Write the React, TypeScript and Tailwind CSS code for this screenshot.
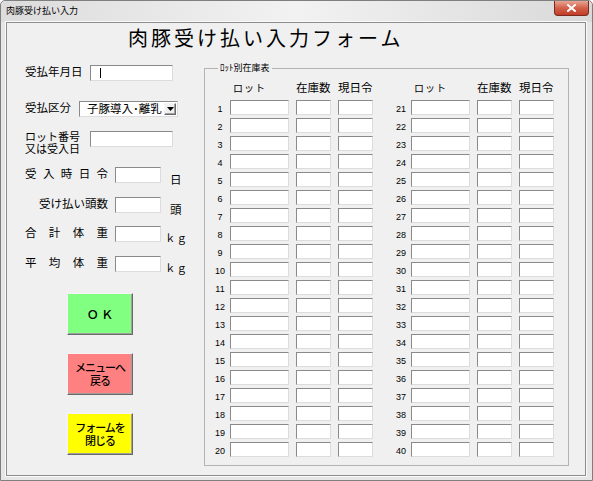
import React from 'react';

const sunken =
  'bg-white border border-t-[#8a8a8a] border-l-[#8a8a8a] border-r-[#dcdcdc] border-b-[#dcdcdc]';
const raised =
  'border border-t-[#f4f4f4] border-l-[#f4f4f4] border-r-[#696969] border-b-[#696969] shadow-[inset_-1px_-1px_0_#a0a0a0]';

function Spaced({ text, className }: { text: string; className?: string }) {
  return (
    <div className={`flex justify-between ${className ?? ''}`}>
      {text.split('').map((c, i) => (
        <span key={i}>{c}</span>
      ))}
    </div>
  );
}

function LotGroup({ from }: { from: number }) {
  const rows = Array.from({ length: 20 }, (_, i) => from + i);
  return (
    <div className="flex flex-col">
      {/* header */}
      <div className="mt-[7px] flex h-[14px] items-center text-[11.5px] leading-none">
        <span className="w-[18px]" />
        <span className="w-[59px] pl-[3px] text-[10px] tracking-[1px]">ロット</span>
        <span className="ml-[7px] w-[35px] whitespace-nowrap">在庫数</span>
        <span className="ml-[7px] w-[35px] whitespace-nowrap">現日令</span>
      </div>
      <div className="mt-[5px] flex flex-col gap-[3px]">
        {rows.map((n) => (
          <div key={n} className="flex h-[15px]">
            <span className="mr-[2px] w-[16px] self-end pb-[1px] text-center font-['Liberation_Sans',sans-serif] text-[9px] font-medium leading-none">
              {n}
            </span>
            <div className={`${sunken} w-[59px]`} />
            <div className={`${sunken} ml-[7px] w-[35px]`} />
            <div className={`${sunken} ml-[7px] w-[35px]`} />
          </div>
        ))}
      </div>
    </div>
  );
}

export default function App() {
  return (
    <div className="flex h-[481px] w-[593px] flex-col rounded-t-[5px] border border-[#7f7f7f] bg-[#e6e6e6] font-['Noto_Sans_CJK_JP',sans-serif] text-black">
      {/* Title bar */}
      <div className="flex h-[21px] shrink-0 items-start justify-between rounded-t-[5px] bg-linear-to-r from-[#dcdcdc] via-[#f2f2f2] to-[#d9d9d9] pl-[5px] pr-[3px]">
        <span className="mt-[4px] text-[9px] leading-[12px]">肉豚受け払い入力</span>
        <button className="flex h-[15px] w-[35px] items-center justify-center rounded-b-[4px] border border-t-0 border-[#7a2a20] bg-linear-to-b from-[#e9a593] via-[#d2604b] to-[#c23c26]">
          <svg width="9" height="8" viewBox="0 0 9 8">
            <path d="M1 1 L8 7 M8 1 L1 7" stroke="#ffffff" strokeWidth="2" strokeLinecap="square" />
          </svg>
        </button>
      </div>

      {/* Client area */}
      <div className="mb-[4px] ml-[5px] mr-[6px] flex h-[454px] flex-col border border-[#8d8d8d] bg-[#f0f0f0] shadow-[0_0_0_1px_#fafafa]">
        <div className="h-[39px] pl-[121px] pt-[4px]">
          <h1 className="font-['Liberation_Serif','Noto_Sans_CJK_JP',serif] text-[20px] leading-[24px] tracking-[3px]">
            肉豚受け払い入力フォーム
          </h1>
        </div>

        <div className="flex">
          {/* Left panel */}
          <div className="flex w-[197px] flex-col pl-[18px] text-[11.5px]">
            <div className="mt-[3px] flex h-[16px] items-start">
              <span className="w-[65px] leading-[13px]">受払年月日</span>
              <div className={`${sunken} flex h-[16px] w-[83px] items-center`}>
                <span className="ml-[9px] h-[10px] w-px bg-black" />
              </div>
            </div>

            <div className="mt-[20px] flex h-[16px] items-start">
              <span className="w-[54px] leading-[13px]">受払区分</span>
              <div className={`${sunken} flex h-[16px] w-[99px] items-center justify-between`}>
                <span className="whitespace-nowrap pl-[7px] text-[11.5px] leading-none">子豚導入･離乳</span>
                <div className={`${raised} mr-px flex h-[12px] w-[12px] items-center justify-center bg-[#f0f0f0]`}>
                  <svg width="7" height="4" viewBox="0 0 7 4">
                    <polygon points="0,0 7,0 3.5,4" fill="#000" />
                  </svg>
                </div>
              </div>
            </div>

            <div className="mt-[14px] flex h-[16px] items-start">
              <span className="-mt-[1px] w-[65px] whitespace-nowrap text-[11px] leading-[12px]">
                ロット番号
                <br />
                又は受入日
              </span>
              <div className={`${sunken} h-[16px] w-[83px]`} />
            </div>

            <div className="mt-[20px] flex h-[16px] items-start">
              <Spaced text="受入時日令" className="w-[83px] leading-[13px]" />
              <div className={`${sunken} ml-[7px] h-[16px] w-[46px]`} />
              <span className="-mb-[2px] ml-[9px] self-end leading-[12px]">日</span>
            </div>

            <div className="mt-[14px] flex h-[16px] items-start">
              <span className="w-[83px] text-right leading-[13px]">受け払い頭数</span>
              <div className={`${sunken} ml-[7px] h-[16px] w-[46px]`} />
              <span className="-mb-[2px] ml-[9px] self-end leading-[12px]">頭</span>
            </div>

            <div className="mt-[13px] flex h-[16px] items-start">
              <Spaced text="合計体重" className="w-[83px] leading-[13px]" />
              <div className={`${sunken} ml-[7px] h-[16px] w-[46px]`} />
              <span className="-mb-[2px] ml-[4px] self-end text-[10.5px] leading-[12px] tracking-[1px]">ｋｇ</span>
            </div>

            <div className="mt-[14px] flex h-[16px] items-start">
              <Spaced text="平均体重" className="w-[83px] leading-[13px]" />
              <div className={`${sunken} ml-[7px] h-[16px] w-[46px]`} />
              <span className="-mb-[2px] ml-[4px] self-end text-[10.5px] leading-[12px] tracking-[1px]">ｋｇ</span>
            </div>

            <div className="ml-[42px] flex flex-col">
              <button className={`${raised} mt-[21px] flex h-[42px] w-[66px] items-center justify-center bg-[#80ff80] text-[12px] font-medium`}>
                Ｏ Ｋ
              </button>
              <button className={`${raised} mt-[18px] flex h-[42px] w-[66px] flex-col items-center justify-center bg-[#ff8080] text-[11px] font-medium leading-[13px] tracking-[-1px]`}>
                <span>メニューへ</span>
                <span>戻る</span>
              </button>
              <button className={`${raised} mt-[18px] flex h-[42px] w-[66px] flex-col items-center justify-center bg-[#ffff00] text-[11px] font-medium leading-[13px] tracking-[-1px]`}>
                <span>フォームを</span>
                <span>閉じる</span>
              </button>
            </div>
          </div>

          {/* Lot stock frame */}
          <fieldset className="w-[365px] border border-[#b4b4b4] pb-[8px] pl-[7px]">
            <legend className="ml-[6px] px-[2px] text-[9px] leading-[12px]">ﾛｯﾄ別在庫表</legend>
            <div className="flex gap-[20px]">
              <LotGroup from={1} />
              <LotGroup from={21} />
            </div>
          </fieldset>
        </div>
      </div>
    </div>
  );
}
